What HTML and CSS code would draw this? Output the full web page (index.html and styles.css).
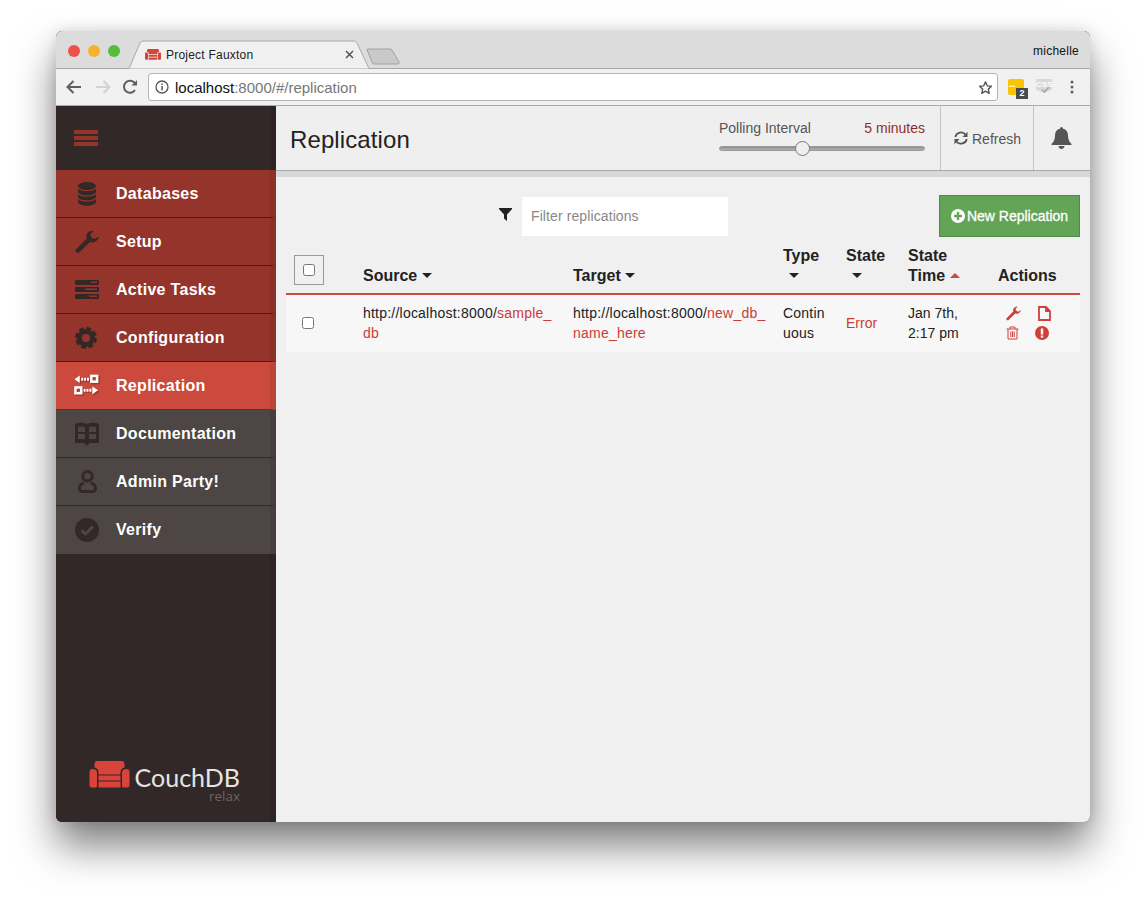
FILE: index.html
```html
<!DOCTYPE html>
<html lang="en">
<head>
<meta charset="utf-8">
<title>Project Fauxton</title>
<link rel="stylesheet" href="styles.css">
</head>
<body>
<div class="window">
  <div class="titlebar">
    <div class="lights"><span class="light red"></span><span class="light amber"></span><span class="light green"></span></div>
    <div class="tab">
      <svg class="tab-shape" width="244" height="29" viewBox="0 0 244 29"><path d="M0.5 28.5 H1 L12 3 Q13 1 15 1 H226 Q228 1 229 3 L241 28.5 H244" fill="#f0f0f0" stroke="#a8a8a8"/></svg>
      <svg class="tab-couch" width="16" height="11" viewBox="0 0 40 27"><path d="M5 3 Q5 0 8 0 H32 Q35 0 35 3 V6.500 Q31.500 7 31 11 V13 H9 V11 Q8.500 7 5 6.500Z M0 11 Q0 8 3 8 Q7.500 8 7.500 12 V25 Q7.500 26.500 6 26.500 H2 Q0 26.500 0 24Z M32.500 12 Q32.500 8 37 8 Q40 8 40 11 V24 Q40 26.500 38 26.500 H34 Q32.500 26.500 32.500 25Z M9 15 H31 V19 H9Z M9 21 H31 V26.500 H9Z" fill="#d9453a"/></svg>
      <span class="tab-title">Project Fauxton</span>
      <svg class="tab-close" width="9" height="9" viewBox="0 0 9 9"><path d="M1 1 L8 8 M8 1 L1 8" stroke="#555" stroke-width="1.5"/></svg>
    </div>
    <svg class="new-tab" width="34" height="17" viewBox="0 0 34 17"><path d="M1 2 Q1 1 2 1 H24 Q25 1 26 2 L33 14 Q33.500 16 32 16 H8 Q7 16 6.500 15Z" fill="#c9c9c9" stroke="#a0a0a0"/></svg>
    <span class="user">michelle</span>
  </div>
  <div class="toolbar">
    <svg class="tb-icon" width="16" height="14" viewBox="0 0 16 14"><path d="M15 7 H2 M7.500 1 L1.500 7 L7.500 13" fill="none" stroke="#5f5f5f" stroke-width="2"/></svg>
    <svg class="tb-icon" width="16" height="14" viewBox="0 0 16 14"><path d="M1 7 H14 M8.500 1 L14.500 7 L8.500 13" fill="none" stroke="#d2d2d2" stroke-width="2"/></svg>
    <svg class="tb-icon" width="16" height="16" viewBox="0 0 16 16"><path d="M13 11 A6 6 0 1 1 13 4.500" fill="none" stroke="#5f5f5f" stroke-width="2"/><path d="M9.500 6.500 H15 V1Z" fill="#5f5f5f"/></svg>
    <div class="urlbar">
      <svg class="url-info" width="14" height="14" viewBox="0 0 14 14"><circle cx="7" cy="7" r="6" fill="none" stroke="#555" stroke-width="1.300"/><rect x="6.300" y="6" width="1.500" height="4.500" fill="#555"/><rect x="6.300" y="3.500" width="1.500" height="1.500" fill="#555"/></svg>
      <span class="url-text"><span class="url-host">localhost</span>:8000/#/replication</span>
      <svg class="url-star" width="15" height="15" viewBox="0 0 24 24"><path d="M12 3 L14.800 9.300 L21.500 10 L16.500 14.600 L17.900 21.300 L12 17.900 L6.100 21.300 L7.500 14.600 L2.500 10 L9.200 9.300Z" fill="none" stroke="#555" stroke-width="2.200" stroke-linejoin="round"/></svg>
    </div>
    <div class="ext ext-yellow"><span class="ext-dots">&#8226;&#8226;&#8226;</span><span class="ext-badge">2</span></div>
    <div class="ext ext-css"><span class="css-shield">CSS</span><svg class="css-check" width="9" height="7" viewBox="0 0 9 7"><path d="M1 3.500 L3.500 6 L8 1" fill="none" stroke="#a8a8a8" stroke-width="1.600"/></svg></div>
    <svg class="tb-menu" width="4" height="14" viewBox="0 0 4 14"><circle cx="2" cy="2" r="1.500" fill="#5f5f5f"/><circle cx="2" cy="7" r="1.500" fill="#5f5f5f"/><circle cx="2" cy="12" r="1.500" fill="#5f5f5f"/></svg>
  </div>
  <div class="app">
    <aside class="sidebar">
      <div class="menu-head"><div class="burger"><span></span><span></span><span></span></div></div>
      <nav class="nav">
        <a class="nav-item">
          <span class="nav-icon"><svg width="20" height="24" viewBox="0 0 20 24"><g fill="#322828"><ellipse cx="10" cy="4" rx="9" ry="4"/><path d="M1 6.500 C3 10 17 10 19 6.500 V10 C17 14.500 3 14.500 1 10Z"/><path d="M1 12 C3 15.500 17 15.500 19 12 V15 C17 19.500 3 19.500 1 15Z"/><path d="M1 17 C3 20.500 17 20.500 19 17 V20 C17 25 3 25 1 20Z"/></g></svg></span>
          <span>Databases</span>
        </a>
        <a class="nav-item">
          <span class="nav-icon"><svg width="24" height="24" viewBox="0 0 24 24"><path d="M16 1 C12.500 1.500 10.500 5 11.800 8.500 L1 19.500 C-0.500 21 2 24 4 22.500 L15 12 C19 13.500 23 11 24 6.500 L19.500 9 L16 7 L15.500 3.500 L19 1.500 Q17.500 0.800 16 1Z" fill="#322828"/></svg></span>
          <span>Setup</span>
        </a>
        <a class="nav-item">
          <span class="nav-icon"><svg width="24" height="19" viewBox="0 0 24 19"><g fill="#322828"><rect width="24" height="5" rx="1"/><rect y="7" width="24" height="5" rx="1"/><rect y="14" width="24" height="5" rx="1"/></g><g fill="#95342a"><rect x="16" y="1.500" width="6" height="1.500"/><rect x="10" y="8.500" width="12" height="1.500"/><rect x="14" y="15.500" width="8" height="1.500"/></g></svg></span>
          <span>Active Tasks</span>
        </a>
        <a class="nav-item">
          <span class="nav-icon"><svg class="gear" width="22" height="22" viewBox="0 0 22 22"><circle cx="11" cy="11" r="6.500" fill="none" stroke="#322828" stroke-width="5"/><circle cx="11" cy="11" r="9" fill="none" stroke="#322828" stroke-width="4" stroke-dasharray="4.500 2.570"/></svg></span>
          <span>Configuration</span>
        </a>
        <a class="nav-item active">
          <span class="nav-icon"><svg width="27" height="24" viewBox="0 0 27 24"><g fill="#9a3a30" transform="translate(1.500 1.500)"><path d="M0.500 5 L6 1 V9Z"/><rect x="7.500" y="3.500" width="2" height="3"/><rect x="10.500" y="3.500" width="2" height="3"/><rect x="13.500" y="3.500" width="2" height="3"/><rect x="18" y="1.500" width="6" height="6" fill="none" stroke="#9a3a30" stroke-width="2.600"/><rect x="1.500" y="13.500" width="6" height="6" fill="none" stroke="#9a3a30" stroke-width="2.600"/><rect x="10" y="15" width="2" height="3"/><rect x="13" y="15" width="2" height="3"/><rect x="16" y="15" width="2" height="3"/><path d="M19 12.500 L25 16.500 L19 20.500Z"/></g><g fill="#fff"><path d="M0.500 5 L6 1 V9Z"/><rect x="7.500" y="3.500" width="2" height="3"/><rect x="10.500" y="3.500" width="2" height="3"/><rect x="13.500" y="3.500" width="2" height="3"/><rect x="18" y="1.500" width="6" height="6" fill="none" stroke="#fff" stroke-width="2.600"/><rect x="1.500" y="13.500" width="6" height="6" fill="none" stroke="#fff" stroke-width="2.600"/><rect x="10" y="15" width="2" height="3"/><rect x="13" y="15" width="2" height="3"/><rect x="16" y="15" width="2" height="3"/><path d="M19 12.500 L25 16.500 L19 20.500Z"/></g></svg></span>
          <span>Replication</span>
        </a>
        <a class="nav-item muted">
          <span class="nav-icon"><svg width="24" height="24" viewBox="0 0 24 24"><path d="M0 2 Q6 -0.500 12 2 Q18 -0.500 24 2 V21 H15 L12 24 L9 21 H0Z" fill="#322828"/><g fill="#4d4644"><path d="M3 5 Q6 4 10 5 V10 H3Z"/><path d="M14 5 Q18 4 21 5 V10 H14Z"/><rect x="3" y="12" width="7" height="5"/><rect x="14" y="12" width="7" height="5"/></g></svg></span>
          <span>Documentation</span>
        </a>
        <a class="nav-item muted">
          <span class="nav-icon"><svg width="19" height="23" viewBox="0 0 20 24"><g fill="none" stroke="#322828" stroke-width="3"><ellipse cx="10" cy="6.500" rx="5" ry="5"/><path d="M6.500 13.500 C3 14.500 1.500 16 1.500 19 C1.500 21.500 3 22.500 5 22.500 H15 C17 22.500 18.500 21.500 18.500 19 C18.500 16 17 14.500 13.500 13.500"/></g></svg></span>
          <span>Admin Party!</span>
        </a>
        <a class="nav-item muted">
          <span class="nav-icon"><svg width="24" height="24" viewBox="0 0 24 24"><circle cx="12" cy="12" r="12" fill="#322828"/><path d="M6.500 12.500 L10.500 16 L18 8.500" fill="none" stroke="#4d4644" stroke-width="3"/></svg></span>
          <span>Verify</span>
        </a>
      </nav>
      <div class="logo">
        <svg class="logo-couch" width="41" height="27" viewBox="0 0 40 27"><path d="M5 3 Q5 0 8 0 H32 Q35 0 35 3 V6.500 Q31.500 7 31 11 V13.500 H9 V11 Q8.500 7 5 6.500Z M0 11 Q0 8 3 8 Q7.500 8 7.500 12 V25 Q7.500 26.500 6 26.500 H2 Q0 26.500 0 24Z M32.500 12 Q32.500 8 37 8 Q40 8 40 11 V24 Q40 26.500 38 26.500 H34 Q32.500 26.500 32.500 25Z M9 14.500 H31 V19.500 H9Z M9 20.500 H31 V26.500 H9Z" fill="#d9433a"/></svg>
        <div class="logo-words"><span class="logo-name">CouchDB</span><span class="logo-relax">relax</span></div>
      </div>
    </aside>
    <main class="main">
      <header class="page-head">
        <h1 class="page-title">Replication</h1>
        <div class="polling">
          <div class="polling-labels"><span>Polling Interval</span><span class="polling-value">5 minutes</span></div>
          <div class="slider"><span class="slider-thumb"></span></div>
        </div>
        <button class="refresh"><svg width="14" height="14" viewBox="0 0 14 14"><g fill="none" stroke="#555" stroke-width="1.800"><path d="M1.300 6 A5.800 5.800 0 0 1 11.500 3.500"/><path d="M12.700 8 A5.800 5.800 0 0 1 2.500 10.500"/></g><path d="M13.500 0.800 V6 H8.500Z M0.500 13.200 V8 H5.500Z" fill="#555"/></svg><span class="refresh-label">Refresh</span></button>
        <div class="bell"><svg width="21" height="22" viewBox="0 0 21 22"><path d="M10.500 0 Q12 0 12 1.800 Q17 3 17 8.500 Q17 14 20.500 17 V18 H0.500 V17 Q4 14 4 8.500 Q4 3 9 1.800 Q9 0 10.500 0Z M7.500 19 H13.500 Q13 22 10.500 22 Q8 22 7.500 19Z" fill="#555"/></svg></div>
      </header>
      <div class="band"></div>
      <section class="content">
        <div class="tools">
          <svg class="filter-icon" width="13" height="13" viewBox="0 0 13 13"><path d="M0 0 H13 V1 L8 6.500 V13 L5 10.500 V6.500 L0 1Z" fill="#222"/></svg>
          <input class="filter" type="text" placeholder="Filter replications">
          <button class="new-btn"><svg width="14" height="14" viewBox="0 0 14 14"><circle cx="7" cy="7" r="7" fill="#fff"/><path d="M7 3 V11 M3 7 H11" stroke="#64a456" stroke-width="2.400"/></svg>New Replication</button>
        </div>
        <div class="table">
          <div class="t-head">
            <div class="cell check-head"><span class="check-box"><input type="checkbox" class="check"></span></div>
            <div class="cell">Source <i class="caret"></i></div>
            <div class="cell">Target <i class="caret"></i></div>
            <div class="cell">Type<br><i class="caret caret-low"></i></div>
            <div class="cell">State<br><i class="caret caret-low"></i></div>
            <div class="cell">State<br>Time <i class="caret up"></i></div>
            <div class="cell">Actions</div>
          </div>
          <div class="t-row">
            <div class="cell check-cell"><input type="checkbox" class="check"></div>
            <div class="cell wrap">http://localhost:8000/<a class="link">sample_db</a></div>
            <div class="cell wrap">http://localhost:8000/<a class="link">new_db_name_here</a></div>
            <div class="cell wrap">Continuous</div>
            <div class="cell state"><a class="link">Error</a></div>
            <div class="cell">Jan 7th,<br>2:17 pm</div>
            <div class="cell actions">
              <svg width="15" height="15" viewBox="0 0 24 24"><path d="M16 1 C12.500 1.500 10.500 5 11.800 8.500 L1 19.500 C-0.500 21 2 24 4 22.500 L15 12 C19 13.500 23 11 24 6.500 L19.500 9 L16 7 L15.500 3.500 L19 1.500 Q17.500 0.800 16 1Z" fill="#d0403a"/></svg>
              <svg class="act-end" width="13" height="15" viewBox="0 0 13 15"><path d="M1 1 H8 L12 5 V14 H1Z M8 1 V5 H12" fill="none" stroke="#d0403a" stroke-width="1.800"/></svg>
              <svg width="13" height="14" viewBox="0 0 13 14"><path d="M0.500 3 H12.500 M4 3 V1 H9 V3 M2 3 V13 H11 V3 M4.800 5.500 V11 M6.500 5.500 V11 M8.200 5.500 V11" fill="none" stroke="#d0403a"/></svg>
              <svg width="14" height="14" viewBox="0 0 14 14"><circle cx="7" cy="7" r="7" fill="#d0403a"/><rect x="5.800" y="2.500" width="2.400" height="6" fill="#f7f7f7"/><rect x="5.800" y="9.500" width="2.400" height="2.200" fill="#f7f7f7"/></svg>
            </div>
          </div>
        </div>
      </section>
    </main>
  </div>
</div>
</body>
</html>
```
FILE: styles.css
```css
* { box-sizing: border-box; }
html, body { margin: 0; height: 100%; background: #fff; }
body { padding: 31px 56px 0; font-family: "Liberation Sans", Arial, sans-serif; color: #333; overflow: hidden; }
.window { width: 1034px; height: 791px; display: flex; flex-direction: column; border-radius: 6px; overflow: visible; box-shadow: 0 24px 40px rgba(0,0,0,.5), 0 0 14px rgba(0,0,0,.12); background: #322828; }

.titlebar { height: 38px; background: #dcdcdc; border-bottom: 1px solid #a8a8a8; border-radius: 6px 6px 0 0; display: flex; align-items: flex-start; position: relative; padding-left: 12px; }
.lights { display: flex; gap: 8px; margin-top: 14px; }
.light { width: 12px; height: 12px; border-radius: 50%; }
.red { background: #f0504c; }
.amber { background: #f6b22e; }
.green { background: #55bd3c; }
.tab { width: 244px; height: 29px; margin: 9px 0 0 8px; position: relative; display: flex; align-items: center; padding: 0 15px 0 17px; flex: none; }
.tab-shape { position: absolute; left: 0; top: 0; }
.tab-couch, .tab-title, .tab-close { position: relative; }
.tab-couch { margin-right: 5px; }
.tab-title { font-size: 12px; color: #222; flex: 1; letter-spacing: .22px; }
.tab-close { margin-right: 3px; }
.new-tab { margin: 17px 0 0 -6px; }
.user { margin-left: auto; margin-right: 11px; margin-top: 13px; font-size: 12px; color: #111; letter-spacing: .25px; }

.toolbar { height: 37px; background: #f1f1f1; border-bottom: 1px solid #a8a8a8; display: flex; align-items: center; padding: 0 16px 0 10px; flex: none; }
.tb-icon { margin-right: 13px; flex: none; }
.tb-icon:nth-child(2) { margin-right: 11px; }
.tb-icon:nth-child(3) { margin-right: 10px; }
.urlbar { width: 850px; height: 28px; background: #fff; border: 1px solid #b4b4b4; border-radius: 3px; display: flex; align-items: center; padding: 0 4px 0 6px; margin-right: 10px; flex: none; }
.url-text { margin-left: 6px; font-size: 15px; color: #777; flex: 1; }
.url-host { color: #111; }
.ext { position: relative; width: 16px; height: 16px; flex: none; }
.ext-yellow { background: #fcc400; border-radius: 2px; margin-right: 12px; }
.ext-dots { position: absolute; left: 1px; top: 2px; color: #fff; font-size: 6px; line-height: 10px; }
.ext-badge { position: absolute; left: 8px; top: 9px; width: 12px; height: 11px; background: #4a4a4a; color: #fff; font-size: 9px; font-weight: bold; line-height: 11px; text-align: center; }
.ext-css { margin-right: 18px; }
.css-shield { display: block; height: 14px; background: #d8d8d8; color: #fff; font-size: 8px; font-weight: bold; line-height: 11px; text-align: center; clip-path: polygon(0 0, 100% 0, 100% 75%, 50% 100%, 0 75%); }
.css-check { position: absolute; right: 2px; top: 7px; }
.tb-menu { flex: none; }

.app { flex: 1; display: flex; min-height: 0; }
.sidebar { width: 220px; flex: none; display: flex; flex-direction: column; background: #322828; border-right: 6px solid #2d2423; border-radius: 0 0 0 6px; margin-right: 0; }
.menu-head { height: 64px; display: flex; align-items: center; padding-left: 18px; }
.burger { width: 24px; display: flex; flex-direction: column; gap: 2px; }
.burger span { height: 4px; background: #95342a; display: block; }
.nav { display: flex; flex-direction: column; margin-right: -6px; }
.nav-item { height: 48px; display: flex; align-items: center; padding-left: 18px; background: #95342a; border-right: 6px solid #8a3228; border-bottom: 1px solid #3e201c; color: #fff; font-size: 16px; font-weight: bold; letter-spacing: .3px; }
.nav-item.active { background: #cb4a3d; border-right-color: #bb4539; border-bottom-color: #6e2a22; }
.nav-item.muted { background: #4d4644; border-right-color: #463f3e; border-bottom-color: #322828; }
.nav-item:last-child { border-bottom: 0; }
.nav-icon { width: 26px; height: 24px; margin-right: 16px; display: flex; align-items: center; justify-content: center; flex: none; }
.gear { margin-left: -2px; }
.logo { margin-top: auto; padding: 0 30px 20px 33px; display: flex; gap: 4px; align-items: flex-start; }
.logo-couch { flex: none; }
.logo-words { display: flex; flex-direction: column; align-items: flex-end; margin-top: 4px; flex: 1; }
.logo-name { font-family: Lato, sans-serif; font-weight: 400; font-size: 25px; line-height: 24px; color: #e4e4e4; }
.logo-relax { font-family: "Open Sans", sans-serif; font-size: 13.500px; line-height: 12px; margin-top: 1px; color: #666; }

.main { flex: 1; min-width: 0; display: flex; flex-direction: column; background: #f0f0f0; border-radius: 0 0 6px 0; }
.page-head { height: 65px; display: flex; align-items: stretch; background: #efefef; border-bottom: 1px solid #a8a8a8; flex: none; }
.page-title { margin: 0; padding-left: 14px; font-size: 24px; font-weight: normal; color: #222; line-height: 67px; flex: 1; letter-spacing: .1px; }
.polling { width: 206px; margin-right: 15px; padding-top: 13px; font-size: 14px; color: #555; }
.polling-labels { display: flex; justify-content: space-between; line-height: 19px; }
.polling-value { color: #8f2e25; }
.slider { height: 5px; margin-top: 8px; background: linear-gradient(#8e8e8e, #b5b5b5); border-radius: 3px; border: 1px solid #999; position: relative; }
.slider-thumb { position: absolute; left: 75px; top: -6px; width: 15px; height: 15px; border-radius: 50%; background: #efefef; border: 1px solid #777; }
.refresh { width: 93px; border: 0; border-left: 1px solid #c4c4c4; background: none; padding: 0 0 0 13px; display: flex; align-items: center; gap: 4px; font: 14px "Liberation Sans", Arial, sans-serif; color: #555; }
.refresh-label { margin-top: 2px; }
.bell { width: 57px; border-left: 1px solid #c4c4c4; display: flex; align-items: center; justify-content: center; padding-right: 2px; }
.band { height: 6px; background: #d8d8d8; flex: none; }

.content { flex: 1; padding: 18px 10px 0; }
.tools { display: flex; align-items: center; height: 42px; }
.filter-icon { margin-left: 213px; margin-right: 10px; margin-top: -3px; }
.filter { width: 206px; height: 39px; border: 0; background: #fff; padding: 0 9px 2px; font: 14px "Liberation Sans", Arial, sans-serif; letter-spacing: .1px; margin-top: 1px; }
.filter::placeholder { color: #888; opacity: 1; }
.new-btn { margin-left: auto; width: 141px; height: 42px; background: #64a456; border: 1px solid #4f8b44; color: #fff; font: 14px "Liberation Sans", Arial, sans-serif; -webkit-text-stroke: .3px #fff; display: flex; align-items: center; justify-content: center; gap: 2px; padding: 0; }
.table { margin-top: 9px; font-size: 14px; color: #222; }
.t-head, .t-row { display: grid; grid-template-columns: 77px 210px 210px 63px 62px 90px 82px; }
.t-head { border-bottom: 2px solid #cb4a3d; font-size: 16px; font-weight: bold; line-height: 20px; align-items: end; padding-bottom: 7px; }
.t-row { background: #f7f7f7; height: 57px; padding-bottom: 1px; line-height: 20px; align-items: center; }
.wrap { word-break: break-all; padding-right: 16px; letter-spacing: .22px; }
.check-head { padding-left: 8px; align-self: end; margin-bottom: 1px; }
.check-box { width: 30px; height: 30px; border: 1px solid #999; display: flex; align-items: center; justify-content: center; }
.check-cell { padding-left: 16px; display: flex; }
.check { margin: 0; width: 12px; height: 12px; }
.caret { display: inline-block; width: 0; height: 0; border: 5px solid transparent; border-top-color: #222; border-bottom: 0; vertical-align: 3px; }
.caret-low { margin-left: 6px; }
.caret.up { border-top: 0; border-bottom: 5px solid #cb4a3d; }
.link { color: #cb3c36; }
.state { padding-top: 0; }
.actions { display: grid; grid-template-columns: 16px 16px; column-gap: 13px; row-gap: 5px; padding-left: 8px; justify-items: start; align-content: center; }
.act-end { justify-self: end; }
```
